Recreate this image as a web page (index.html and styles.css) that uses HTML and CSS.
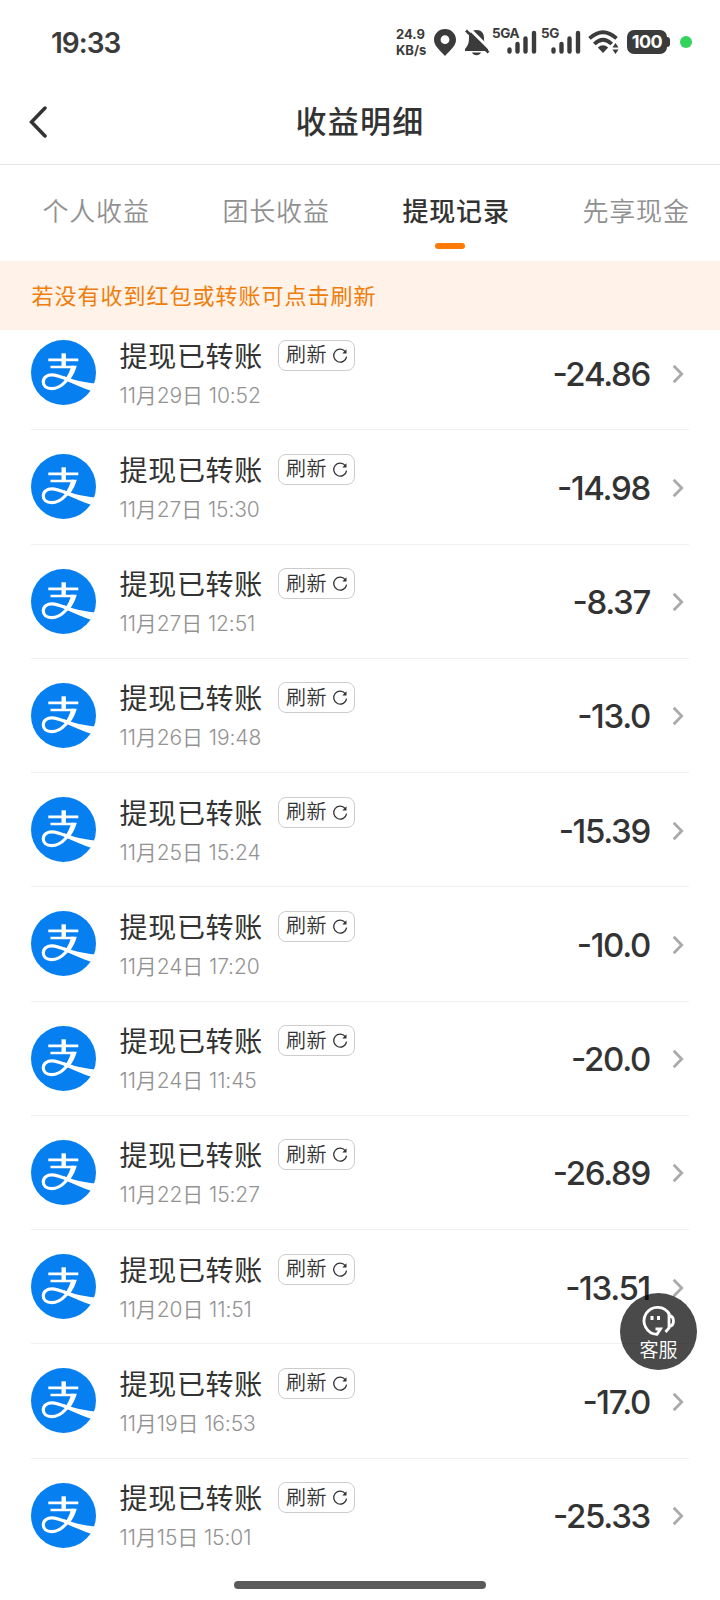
FILE: index.html
```
<!DOCTYPE html>
<html lang="zh-CN">
<head>
  <meta charset="UTF-8"/>
  <meta name="viewport" content="width=device-width,initial-scale=1"/>
  <title>收益明细</title>
  <link rel="stylesheet" href="styles.css">
</head>
<body>

<!-- shared icons -->
<svg class="sprite" aria-hidden="true">
  <symbol id="i-alipay" viewBox="0 0 65 65">
    <circle cx="32.5" cy="32.5" r="32.5" fill="#067ff0"/>
    <path d="M17.300 19.900h30M19.500 27h23.500" stroke="#fff" stroke-width="2.600"/>
    <path d="M32.700 13.300V27" stroke="#fff" stroke-width="4.400"/>
    <path d="M42.500 27C39 37.500 31.500 48.600 20.500 48.600 15.500 48.600 12.300 46 12.300 42 12.300 37.500 16 34.800 21 34.800 26.500 34.800 31 37.200 38 40" fill="none" stroke="#fff" stroke-width="3.200"/>
    <path d="M40.200 25.700h5.600C44.300 31 42.300 35 39.500 39L34.500 38.500C37 35 39.200 30.500 40.200 25.700z" fill="#fff"/>
    <path d="M33 36.300C41 39.500 52 42.500 64 43.500L59.800 50.700C52 48 42 44 33 39.800z" fill="#fff"/>
  </symbol>
  <symbol id="i-refresh" viewBox="0 0 16 16">
    <path d="M13.600 4A6.500 6.500 0 1 0 14.600 8.600" fill="none" stroke="#333" stroke-width="1.300"/>
    <path d="M14.500 1.300v4.200h-4.200z" fill="#333"/>
  </symbol>
  <symbol id="i-next" viewBox="0 0 12 20">
    <path d="M1.700 1.700 9.700 10 1.700 18.300" fill="none" stroke="#aaa" stroke-width="2.800"/>
  </symbol>
  <symbol id="i-bars" viewBox="0 0 30 24">
    <path d="M2.500 19.500v2M10.500 14v7.500M18.500 8.500v13M27 3v18.500" fill="none" stroke="#3b3b3b" stroke-width="4.400" stroke-linecap="round"/>
  </symbol>
</svg>

<!-- status bar -->
<div class="status">
  <span class="clock">19:33</span>
  <div class="status-icons">
    <span class="speed">24.9<br>KB/s</span>
    <svg class="pin" viewBox="0 0 22 27"><path d="M11 0C4.800 0 0 4.800 0 10.700 0 17 5.500 20.500 11 27c5.500-6.500 11-10 11-16.300C22 4.800 17.200 0 11 0zm0 6.300a4.400 4.400 0 1 1 0 8.800 4.400 4.400 0 0 1 0-8.800z" fill="#3b3b3b" fill-rule="evenodd"/></svg>
    <svg class="bell" viewBox="0 0 26 27">
      <path d="M12.500 1c5 0 7.500 3.500 7.500 8 0 5 1 7.500 4 11v2H1v-2c3-3.500 4-6 4-11 0-4.500 2.500-8 7.500-8zM8 23.500h9c-1.500 3.500-7.500 3.500-9 0z" fill="#3b3b3b"/>
      <path d="M3.800-1.800 27 21" stroke="#fff" stroke-width="3"/>
      <path d="M2 1.500 24.500 23.500" stroke="#3b3b3b" stroke-width="2.600"/>
    </svg>
    <span class="signal ga"><b>5GA</b><svg><use href="#i-bars"/></svg></span>
    <span class="signal g5"><b>5G</b><svg><use href="#i-bars"/></svg></span>
    <svg class="wifi" viewBox="0 0 32 24">
      <path d="M1.500 8.300Q15 -4 28.500 8.300M6.300 14Q15 5.500 23.700 14" fill="none" stroke="#3b3b3b" stroke-width="3.800"/>
      <path d="M9.800 17.500q5.200-4.300 10.400 0L15 23z" fill="#3b3b3b"/>
      <path d="M27.500 13l3 4.500h-6zM27.500 24l3-4.500h-6z" fill="#3b3b3b"/>
    </svg>
    <span class="battery">100</span>
    <i class="dot"></i>
  </div>
</div>

<header class="nav">
  <svg class="back" viewBox="0 0 20 32"><path d="M17 2 3.500 16 17 30" fill="none" stroke="#333" stroke-width="3.500" stroke-linecap="round"/></svg>
  <h1>收益明细</h1>
</header>

<nav class="tabs">
  <a>个人收益</a>
  <a>团长收益</a>
  <a class="active">提现记录</a>
  <a>先享现金</a>
</nav>

<div class="notice">若没有收到红包或转账可点击刷新</div>

<ul class="list" id="list"></ul>

<div class="service">
  <svg viewBox="0 0 34 32" fill="none" stroke="#fff" stroke-width="2.800">
    <path d="M27.500 9.500A13.500 13.500 0 1 0 15 29.300L18.500 24H13.500"/>
    <path d="M27 8.500v14.500l-3.500 4M27 10.500c3.500.5 4.500 2.500 4.500 5.500s-1 5-4.500 5.500"/>
    <path d="M10 11v4M16.500 11v4" stroke-width="3"/>
  </svg>
  <span>客服</span>
</div>

<div class="home-bar"></div>

<script>
  const records = [
    ['11月29日 10:52', '-24.86'],
    ['11月27日 15:30', '-14.98'],
    ['11月27日 12:51', '-8.37'],
    ['11月26日 19:48', '-13.0'],
    ['11月25日 15:24', '-15.39'],
    ['11月24日 17:20', '-10.0'],
    ['11月24日 11:45', '-20.0'],
    ['11月22日 15:27', '-26.89'],
    ['11月20日 11:51', '-13.51'],
    ['11月19日 16:53', '-17.0'],
    ['11月15日 15:01', '-25.33']
  ];

  document.getElementById('list').innerHTML = records.map(([time, amount]) => `
    <li class="row">
      <svg class="logo"><use href="#i-alipay"/></svg>
      <div class="info">
        <div class="name"><span>提现已转账</span><button>刷新<svg><use href="#i-refresh"/></svg></button></div>
        <div class="time">${time}</div>
      </div>
      <span class="amount">${amount}</span>
      <svg class="next"><use href="#i-next"/></svg>
    </li>`).join('');
</script>
</body>
</html>
```
FILE: styles.css
```
*{box-sizing:border-box}
body{margin:0;width:720px;height:1600px;overflow:hidden;position:relative;background:#fff;color:#333;font-family:Inter,"Noto Sans CJK SC",sans-serif}
h1,ul{margin:0;padding:0}
svg{display:block;flex:none}
.sprite{position:absolute;width:0;height:0}

/* status bar */
.status{height:82px;padding:2px 28px 0 51px;display:flex;align-items:center;justify-content:space-between;color:#3b3b3b}
.clock{padding-top:1px;font-size:28px;font-weight:600;letter-spacing:-1px}
.status-icons{display:flex;align-items:center}
.speed{width:31px;font-size:13px;line-height:16px;font-weight:700;white-space:nowrap}
.pin{width:22px;height:27px;margin-left:7px}
.bell{width:26px;height:27px;margin-left:8px}
.signal{position:relative;height:24px;display:flex;justify-content:flex-end}
.signal svg{width:30px;height:24px}
.signal b{position:absolute;left:-1px;top:-4px;font-size:13.500px;line-height:14px;letter-spacing:-.4px}
.ga{width:44px;margin-left:3px}
.g5{width:39px;margin-left:5px}
.wifi{width:32px;height:24px;margin-left:7px}
.battery{position:relative;width:40px;height:24px;margin-left:7px;border-radius:7px;background:#3b3b3b;color:#fff;font-size:18px;line-height:24px;font-weight:700;text-align:center;letter-spacing:-.5px}
.battery::after{content:"";position:absolute;right:-3px;top:7px;width:4px;height:10px;border-radius:0 3px 3px 0;background:#3b3b3b}
.dot{width:12px;height:12px;margin-left:13px;border-radius:50%;background:#34d45c}

/* title bar */
.nav{height:83px;padding:0 28px 2px;display:flex;align-items:center;border-bottom:1px solid #e6e6e6}
.back{width:20px;height:32px}
.nav h1{flex:1;padding-right:20px;text-align:center;font-size:31px;line-height:40px;font-weight:500;letter-spacing:1.300px}

.tabs{height:96px;padding-left:6px;display:flex}
.tabs a{position:relative;flex:0 0 180px;padding:28px 0 0 36.500px;font-size:26px;line-height:38px;letter-spacing:.8px;font-weight:350;color:#909090}
.tabs .active{color:#333;font-weight:500}
.active::after{content:"";position:absolute;left:69px;bottom:12px;width:30px;height:6px;border-radius:3px;background:#fd7a04}

.notice{position:relative;z-index:1;height:69px;padding:1px 0 0 31.500px;background:#fff2e8;color:#ee7d0c;font-size:22px;line-height:69px;letter-spacing:1px}

/* records, first one scrolled partly under the notice */
.list{margin-top:-14px;padding:0 31px;list-style:none}
.row{height:114.250px;display:flex;align-items:center;border-bottom:1px solid #f0f0f0}
.row:last-child{border-color:transparent}
.logo{width:65px;height:65px}
.info{flex:1;margin-left:23.500px;padding-top:2px}
.name{display:flex;align-items:center;font-size:28px;line-height:40px;letter-spacing:.7px}
.name span{padding-top:1px}
.name button{display:flex;align-items:center;width:77px;height:31px;margin:-2px 0 0 14.500px;padding:0 0 0 7.500px;border:1px solid #ccc;border-radius:8px;background:#fff;color:#333;font-family:inherit;font-size:20px;line-height:28px;font-weight:350;letter-spacing:.5px}
.name button svg{width:16px;height:16px;margin:1px 0 0 4.500px}
.time{margin-top:3px;font-size:21px;line-height:32px;font-weight:350;color:#939393;letter-spacing:-.1px}
.amount{padding-top:2px;font-size:33px;font-weight:500;letter-spacing:-1.300px;font-feature-settings:"case"}
.next{width:12px;height:20px;margin:2px 5px 0 22px}

.service{position:absolute;left:620px;top:1293px;width:77px;height:77px;border-radius:50%;background:rgba(0,0,0,.71);color:#fff;display:flex;flex-direction:column;align-items:center;padding-top:12px}
.service svg{width:34px;height:32px}
.service span{font-size:19px;line-height:28px;font-weight:350}

.home-bar{position:absolute;left:234px;bottom:11px;width:252px;height:8px;border-radius:4px;background:#5a5a5a}
```
